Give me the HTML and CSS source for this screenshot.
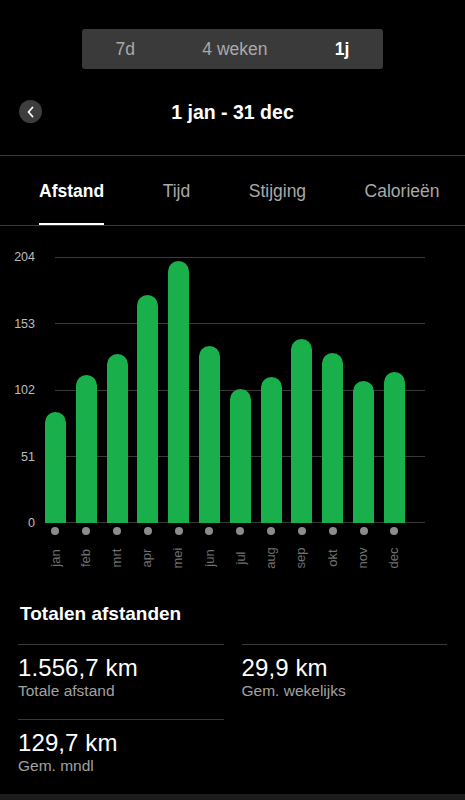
FILE: index.html
```html
<!DOCTYPE html>
<html lang="nl">
<head>
<meta charset="utf-8">
<title>Afstand</title>
<link rel="stylesheet" href="styles.css">
</head>
<body>
<div class="segment">
  <span class="seg">7d</span>
  <span class="seg">4 weken</span>
  <span class="seg active">1j</span>
</div>

<header class="header">
  <button class="back" aria-label="Terug">
    <svg width="10" height="12" viewBox="0 0 10 12"><path d="M6.5 1.5 L2.5 6 L6.5 10.5" fill="none" stroke="#fff" stroke-width="1.8" stroke-linecap="round" stroke-linejoin="round"/></svg>
  </button>
  <h1 class="title">1 jan - 31 dec</h1>
</header>

<nav class="tabs">
  <span class="tab active">Afstand</span>
  <span class="tab">Tijd</span>
  <span class="tab">Stijging</span>
  <span class="tab">Calorieën</span>
</nav>

<section class="chart">
  <div class="ylabels">
    <span>204</span><span>153</span><span>102</span><span>51</span><span>0</span>
  </div>
  <div class="plot">
    <div class="grid">
      <i></i><i></i><i></i><i></i><i></i>
    </div>
    <div class="bars">
      <div class="col"><div class="bar" style="height:111px"></div></div>
      <div class="col"><div class="bar" style="height:147.5px"></div></div>
      <div class="col"><div class="bar" style="height:169px"></div></div>
      <div class="col"><div class="bar" style="height:227.5px"></div></div>
      <div class="col"><div class="bar" style="height:262px"></div></div>
      <div class="col"><div class="bar" style="height:176.5px"></div></div>
      <div class="col"><div class="bar" style="height:134px"></div></div>
      <div class="col"><div class="bar" style="height:146px"></div></div>
      <div class="col"><div class="bar" style="height:183.5px"></div></div>
      <div class="col"><div class="bar" style="height:170px"></div></div>
      <div class="col"><div class="bar" style="height:141.5px"></div></div>
      <div class="col"><div class="bar" style="height:151px"></div></div>
    </div>
  </div>
  <div class="xaxis">
    <div class="xcol"><span class="dot"></span><span class="mlabel"><span>jan</span></span></div>
    <div class="xcol"><span class="dot"></span><span class="mlabel"><span>feb</span></span></div>
    <div class="xcol"><span class="dot"></span><span class="mlabel"><span>mrt</span></span></div>
    <div class="xcol"><span class="dot"></span><span class="mlabel"><span>apr</span></span></div>
    <div class="xcol"><span class="dot"></span><span class="mlabel"><span>mei</span></span></div>
    <div class="xcol"><span class="dot"></span><span class="mlabel"><span>jun</span></span></div>
    <div class="xcol"><span class="dot"></span><span class="mlabel"><span>jul</span></span></div>
    <div class="xcol"><span class="dot"></span><span class="mlabel"><span>aug</span></span></div>
    <div class="xcol"><span class="dot"></span><span class="mlabel"><span>sep</span></span></div>
    <div class="xcol"><span class="dot"></span><span class="mlabel"><span>okt</span></span></div>
    <div class="xcol"><span class="dot"></span><span class="mlabel"><span>nov</span></span></div>
    <div class="xcol"><span class="dot"></span><span class="mlabel"><span>dec</span></span></div>
  </div>
</section>

<section class="totals">
  <h2 class="totals-title">Totalen afstanden</h2>
  <div class="stats">
    <div class="stat">
      <div class="value">1.556,7 km</div>
      <div class="label">Totale afstand</div>
    </div>
    <div class="stat">
      <div class="value">29,9 km</div>
      <div class="label">Gem. wekelijks</div>
    </div>
    <div class="stat">
      <div class="value">129,7 km</div>
      <div class="label">Gem. mndl</div>
    </div>
  </div>
</section>
<div class="footer"></div>
</body>
</html>
```

FILE: styles.css
```css
* { box-sizing: border-box; }

html, body {
  margin: 0;
  padding: 0;
  background: #000;
  color: #fff;
  font-family: "Liberation Sans", Arial, sans-serif;
}

body {
  width: 465px;
  height: 800px;
  overflow: hidden;
}

/* segmented control */
.segment {
  margin: 29px auto 0;
  width: 301px;
  height: 40px;
  background: #3a3a3a;
  border-radius: 3px;
  display: flex;
  justify-content: space-around;
  align-items: center;
  font-size: 17.5px;
  color: #a9a9a9;
}
.seg.active {
  color: #fff;
  font-weight: bold;
}

/* header */
.header {
  height: 87px;
  border-bottom: 1px solid #3b3b3b;
  display: flex;
  align-items: center;
  justify-content: center;
  position: relative;
  padding-bottom: 1px;
}
.back {
  position: absolute;
  left: 19px;
  top: 31px;
  width: 23px;
  height: 23px;
  border-radius: 50%;
  border: 0;
  padding: 0;
  background: #3d3d3d;
  display: flex;
  align-items: center;
  justify-content: center;
}
.title {
  margin: 0;
  font-size: 19.5px;
  font-weight: bold;
  line-height: 24px;
}

/* tabs */
.tabs {
  height: 70px;
  border-bottom: 1px solid #3b3b3b;
  display: flex;
  gap: 58.5px;
  padding-left: 39px;
  font-size: 17.5px;
  color: #a9a9a9;
}
.tab {
  display: flex;
  align-items: center;
  padding-top: 3px;
  border-bottom: 2px solid transparent;
}
.tab.active {
  color: #fff;
  font-weight: bold;
  border-bottom-color: #fff;
}

/* chart */
.chart {
  display: grid;
  grid-template-columns: 40px 1fr;
  padding-top: 31px;
}
.ylabels {
  grid-column: 1;
  grid-row: 1;
  height: 282px;
  margin: -8px 0;
  padding-right: 5px;
  display: flex;
  flex-direction: column;
  justify-content: space-between;
  align-items: flex-end;
  font-size: 12.5px;
  line-height: 16px;
  color: #bdbdbd;
}
.plot {
  grid-column: 2;
  grid-row: 1;
  display: grid;
  height: 266px;
}
.grid, .bars {
  grid-area: 1 / 1;
}
.grid {
  margin-left: 15px;
  width: 370px;
  display: flex;
  flex-direction: column;
  justify-content: space-between;
}
.grid i {
  display: block;
  height: 1px;
  background: #3a3a3a;
}
.bars {
  display: flex;
  align-items: flex-end;
  width: 370px;
  padding-bottom: 0.5px;
}
.col {
  flex: 0 0 30.82px;
  display: flex;
  justify-content: center;
  align-items: flex-end;
}
.bar {
  width: 21px;
  background: #19b04b;
  border-radius: 10.5px 10.5px 0 0;
}

.xaxis {
  grid-column: 2;
  grid-row: 2;
  display: flex;
  width: 370px;
}
.xcol {
  flex: 0 0 30.82px;
  display: flex;
  flex-direction: column;
  align-items: center;
}
.dot {
  margin-top: 4px;
  width: 8px;
  height: 8px;
  border-radius: 50%;
  background: #8c8c8c;
}
.mlabel {
  height: 45px;
  display: flex;
  align-items: center;
  justify-content: center;
}
.mlabel span {
  display: block;
  transform: rotate(-90deg);
  font-size: 13px;
  line-height: 14px;
  color: #707070;
  white-space: nowrap;
}

/* totals */
.totals {
  padding: 0 18px;
}
.totals-title {
  margin: 0;
  padding-top: 22px;
  font-size: 19px;
  line-height: 24px;
  font-weight: bold;
  padding-left: 2px;
}
.stats {
  margin-top: 18px;
  display: grid;
  grid-template-columns: 1fr 1fr;
  column-gap: 18px;
}
.stat {
  border-top: 1px solid #3a3a3a;
  padding-top: 9px;
  padding-bottom: 19px;
}
.value {
  font-size: 24px;
  line-height: 28px;
  letter-spacing: 0.1px;
}
.label {
  font-size: 15.5px;
  line-height: 18px;
  color: #a2a2a2;
}

.footer {
  height: 10px;
  background: #1c1c1c;
}
```
